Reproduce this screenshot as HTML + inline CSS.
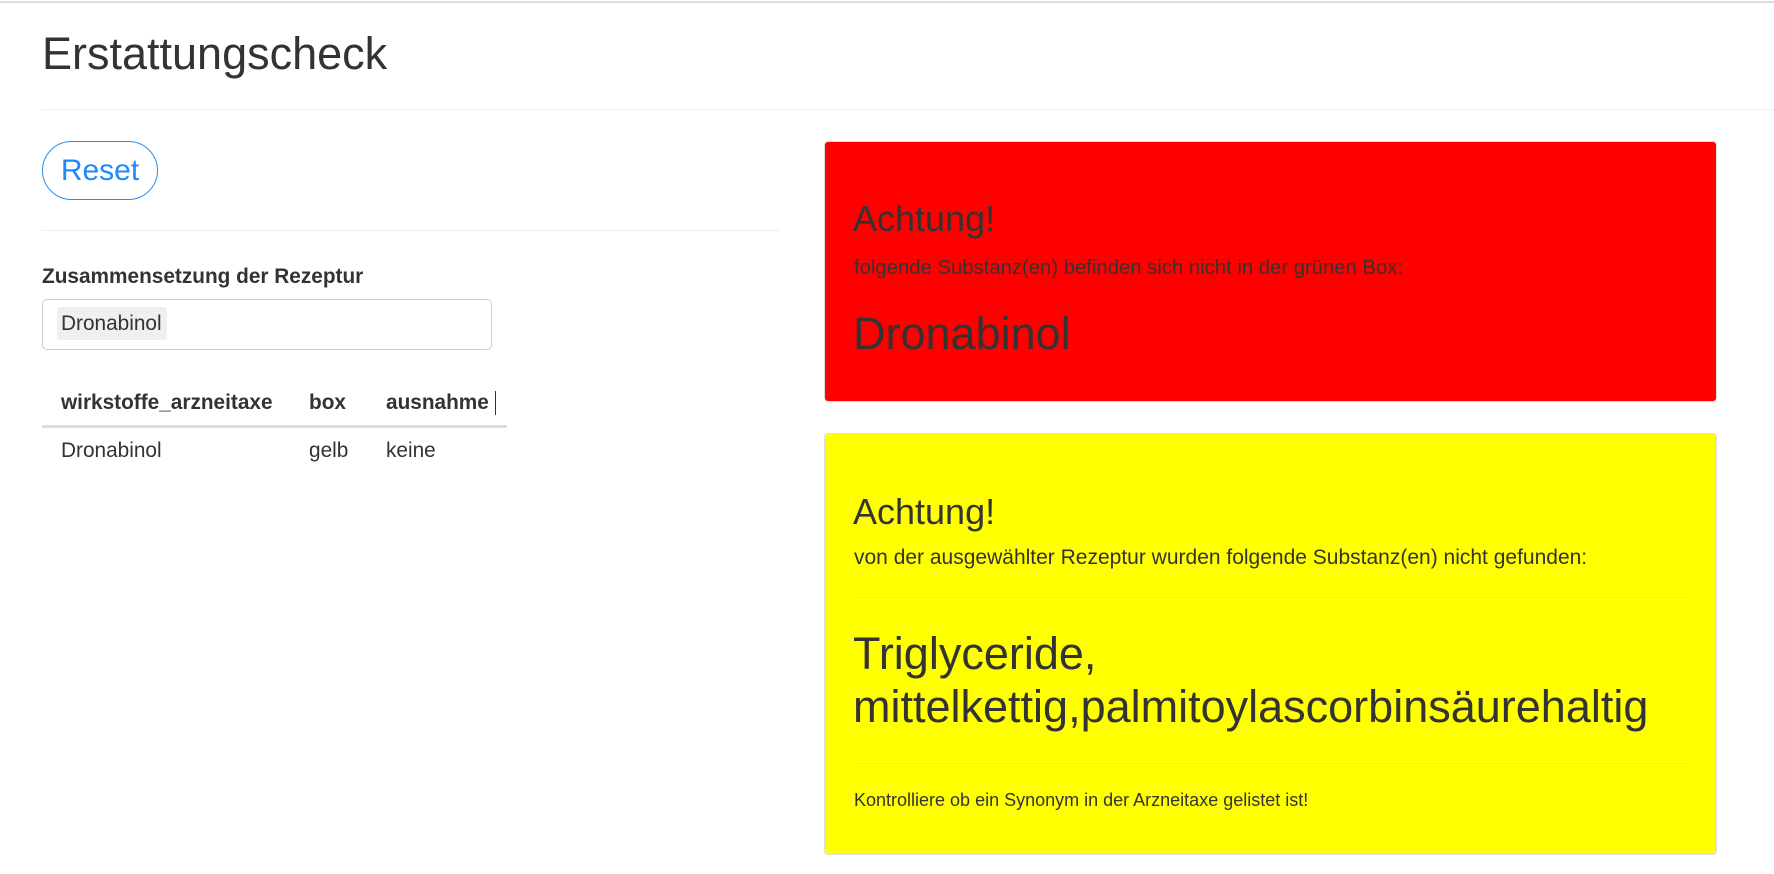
<!DOCTYPE html>
<html><head><meta charset="utf-8"><style>
*{box-sizing:border-box;margin:0;padding:0}
body{width:1774px;height:874px;overflow:hidden;background:#fff;font-family:"Liberation Sans",Arial,sans-serif;color:#333;position:relative}
.a{position:absolute;white-space:nowrap}
</style></head><body>
<div class="a" style="left:0;top:1px;width:1774px;height:2px;background:#ddd"></div>
<div class="a" style="left:42px;top:28px;font-size:45px;line-height:52px">Erstattungscheck</div>
<div class="a" style="left:42px;top:109px;width:1732px;height:1px;background:#eee"></div>
<div class="a" style="left:42px;top:141px;width:116px;height:59px;border:1px solid #2a8cf0;border-radius:30px;color:#1e88ff;font-size:30px;line-height:57px;text-align:center">Reset</div>
<div class="a" style="left:42px;top:230px;width:737px;height:1px;background:#eee"></div>
<div class="a" style="left:42px;top:265px;font-size:20.8px;font-weight:bold;line-height:24px">Zusammensetzung der Rezeptur</div>
<div class="a" style="left:42px;top:299px;width:450px;height:51px;border:1px solid #ccc;border-radius:5px"></div>
<div class="a" style="left:57px;top:307px;width:110px;height:33px;background:#efefef;border-radius:3px;font-size:20.8px;line-height:33px;padding-left:4px">Dronabinol</div>
<div class="a" style="left:61px;top:391px;font-size:20.8px;font-weight:bold">wirkstoffe_arzneitaxe</div>
<div class="a" style="left:309px;top:391px;font-size:20.8px;font-weight:bold">box</div>
<div class="a" style="left:386px;top:391px;font-size:20.8px;font-weight:bold">ausnahme</div>
<div class="a" style="left:495px;top:391px;width:1px;height:24px;background:#333"></div>
<div class="a" style="left:42px;top:425px;width:465px;height:3px;background:#ddd"></div>
<div class="a" style="left:61px;top:439px;font-size:20.8px">Dronabinol</div>
<div class="a" style="left:309px;top:439px;font-size:20.8px">gelb</div>
<div class="a" style="left:386px;top:439px;font-size:20.8px">keine</div>

<div class="a" style="left:824px;top:141px;width:893px;height:261px;background:#f00;border:1px solid #ddd;border-radius:4px"></div>
<div class="a" style="left:853px;top:199px;font-size:36px;line-height:40px">Achtung!</div>
<div class="a" style="left:854px;top:256px;font-size:20.3px;line-height:24px">folgende Substanz(en) befinden sich nicht in der grünen Box:</div>
<div class="a" style="left:853px;top:308px;font-size:45px;line-height:52px">Dronabinol</div>

<div class="a" style="left:824px;top:433px;width:893px;height:422px;background:#ff0;border:1px solid #ddd;border-radius:4px"></div>
<div class="a" style="left:853px;top:492px;font-size:36px;line-height:40px">Achtung!</div>
<div class="a" style="left:854px;top:546px;font-size:21px;line-height:24px">von der ausgewählter Rezeptur wurden folgende Substanz(en) nicht gefunden:</div>
<div class="a" style="left:855px;top:599px;width:832px;height:1px;background:#eee"></div>
<div class="a" style="left:853px;top:627px;font-size:45px;line-height:53px">Triglyceride,<br>mittelkettig,palmitoylascorbinsäurehaltig</div>
<div class="a" style="left:855px;top:761px;width:832px;height:1px;background:#eee"></div>
<div class="a" style="left:854px;top:789px;font-size:18px;line-height:22px">Kontrolliere ob ein Synonym in der Arzneitaxe gelistet ist!</div>
</body></html>
